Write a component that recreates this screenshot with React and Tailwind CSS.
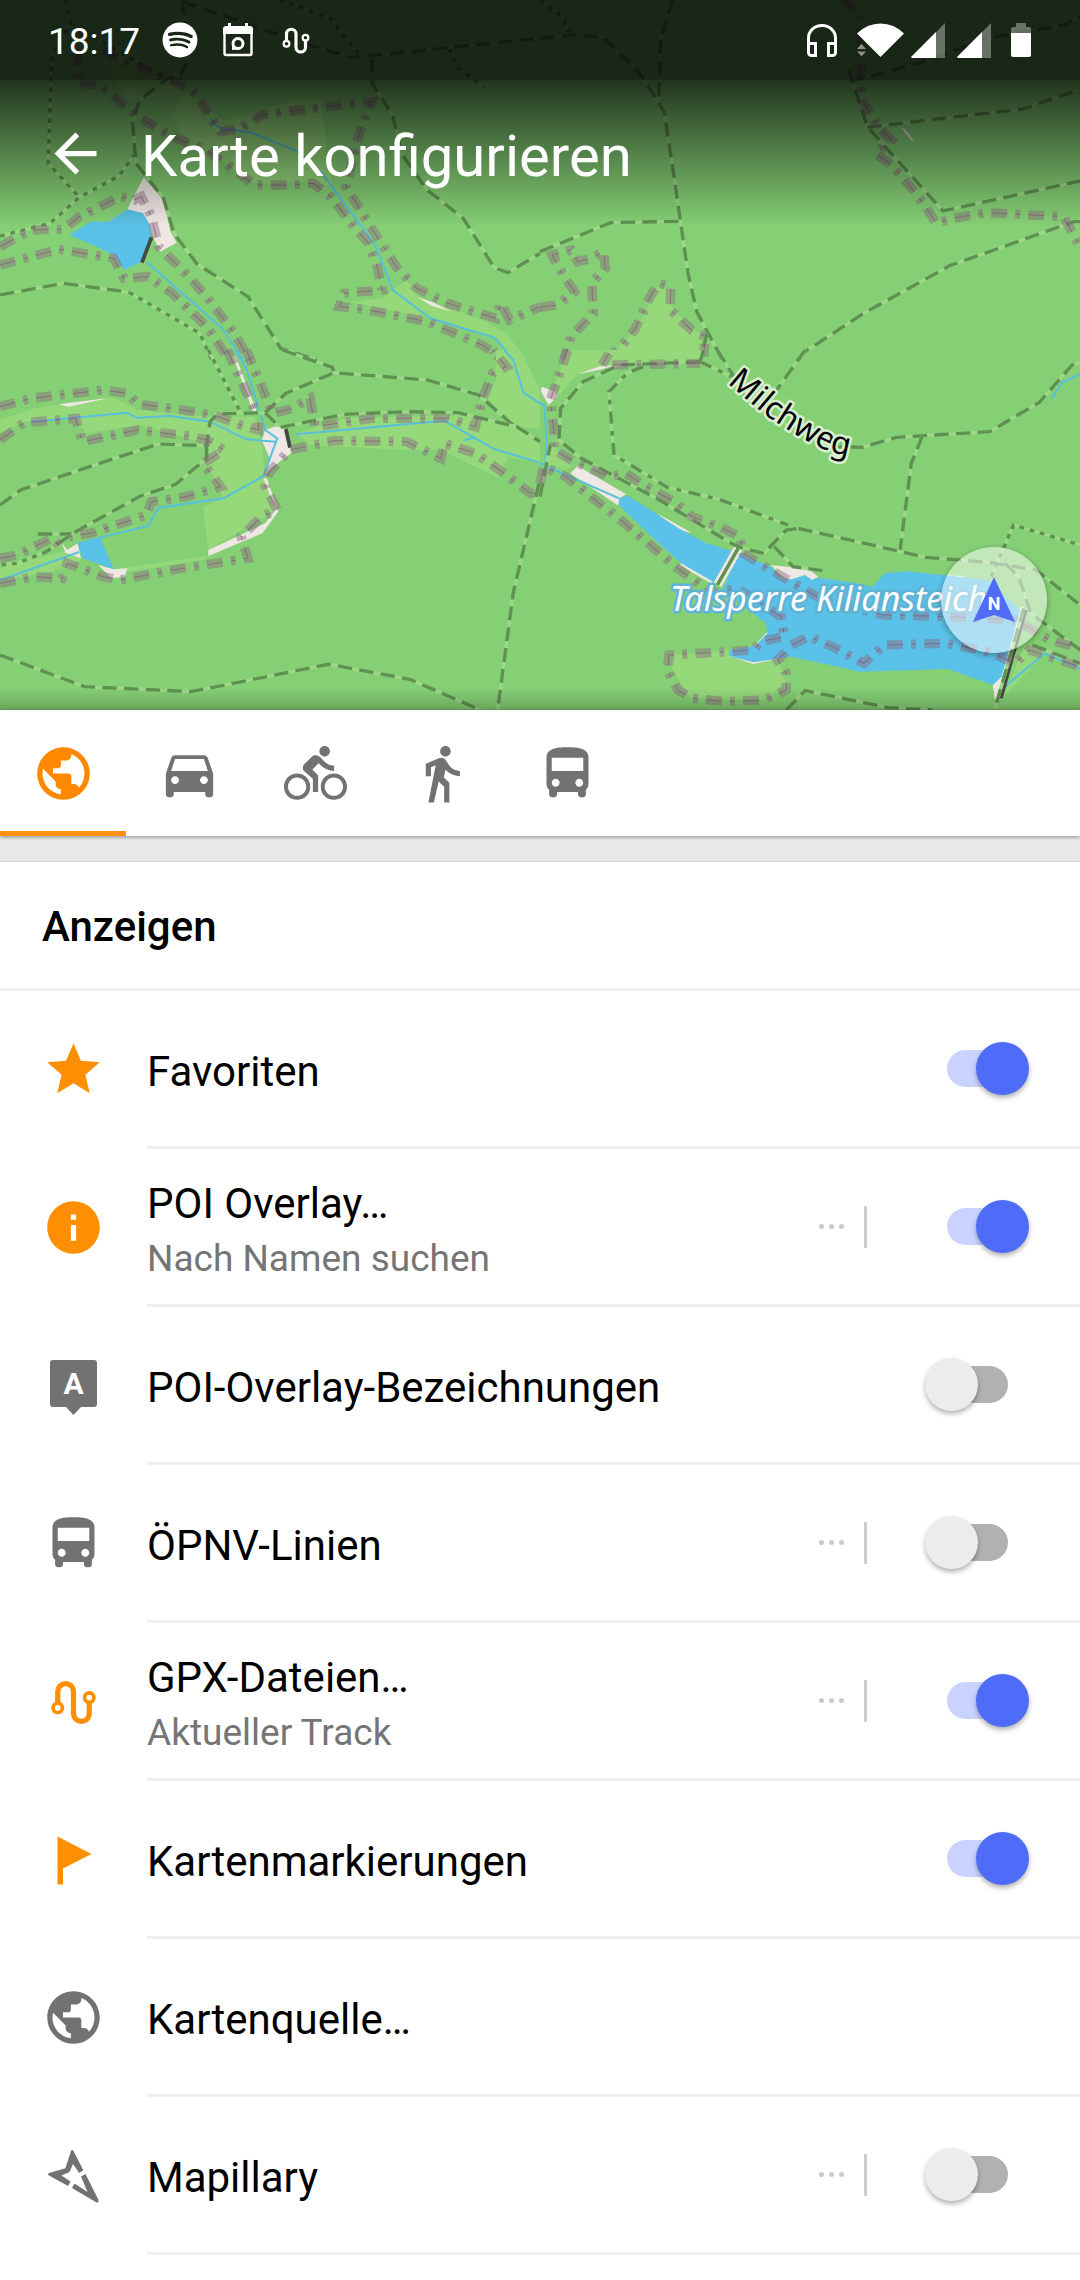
import React, { useState } from "react";
import {
  MdArrowBack,
  MdDirectionsBike,
  MdDirectionsBus,
  MdDirectionsCar,
  MdDirectionsWalk,
  MdInfo,
  MdPublic,
  MdStar,
} from "react-icons/md";
import { FaSpotify } from "react-icons/fa";

// Map data, one entry per tile. Every tile has its own coordinate space.
const TILES = [
  {
    x: 0,
    y: 0,
    meadows: [
      "290,170 340,135 540,280 600,320 650,362 850,303 930,298 965,560 900,545 740,550 540,410 495,345 540,280 370,300",
      "1010,905 1110,895 1180,840 1220,895 1400,960 1470,1000 1530,1080 1495,1080 1435,1013 1250,955",
    ],
    sand: [
      "417,532 475,600 495,695 513,728 465,755 440,700 435,675 415,640 370,628",
      "1210,890 1260,908 1310,935 1255,918",
    ],
    water: ["200,705 265,665 315,665 370,628 415,640 435,675 440,712 410,785 362,810 345,790 330,765 270,735"],
    streams: [
      "425,785 645,985 705,1080",
      "610,355 635,383 730,398 865,455 935,520 1090,735 1140,870 1250,955 1435,1013 1495,1080",
    ],
    dams: ["440,712 412,788"],
    tracks: [
      "530,0 545,185 525,222 485,237 405,300 385,370 395,490 475,595 505,700 572,792 720,890 815,1045 920,1080",
      "530,5 700,65 900,135 1020,172 1170,158 1300,143 1568,115",
      "1080,175 1080,250 1140,345 1165,460 1240,570 1345,655 1435,803 1475,818 1568,760",
      "0,885 185,850 375,877",
    ],
    dotted: [
      "375,877 580,1000 615,1080",
      "190,0 205,70 150,160 140,490 230,592",
      "0,708 145,670 230,592 345,528 390,465",
      "270,110 380,175 485,237",
      "810,0 960,55 1045,165 1080,170",
      "1305,145 1325,200 1405,262",
    ],
    borders: [
      "225,150 225,250 290,255 400,350 500,410 600,450 740,555 840,555 910,550 960,590 1020,670 1070,730 1095,800 1110,870 1000,880 985,920 1070,930 1240,965 1400,1035 1460,1080",
      "300,150 400,200 530,255 570,280 610,350 640,395 700,385 760,345 950,320 1080,305 1040,410 1005,560 1070,670 1150,800 1210,865 1300,910 1440,955 1455,910 1480,960 1568,920",
      "0,740 90,690 185,688 230,650 350,590 390,600 410,590 440,650 460,740 520,800 600,890 680,1000 725,1080",
      "0,795 170,748 270,765 330,775 360,835 430,830 500,880 600,980 640,1040 665,1080",
    ],
  },
  {
    x: 540,
    y: 0,
    meadows: ["340,860 385,870 385,930 475,1010 460,1090 180,1090 280,990"],
    sand: ["1050,385 1058,385 1085,420 1078,422"],
    tracks: [
      "0,115 105,105 185,112 285,215 340,300 360,335 385,500 410,680 430,820 455,935 530,1080",
      "0,755 205,668 405,664",
      "385,0 350,120 345,300",
      "897,210 950,380 1170,633 1568,543",
      "950,382 1250,345 1400,328 1568,268",
      "900,245 1100,190 1300,115 1520,75 1568,50",
      "1568,665 1550,665 1190,797 940,940 765,1058 750,1080",
      "485,1000 465,1080",
    ],
    dotted: ["0,0 65,50 85,100"],
    borders: [
      "880,0 930,40 930,240 935,300 985,385 1020,420 975,460 1020,495 1060,540 1120,620 1150,670 1200,655 1300,638 1520,650 1568,740",
      "0,922 50,915 100,875 70,830 35,765 90,750 110,785 150,775 185,755 190,805 150,850 155,940 90,1010 70,1080",
      "190,1080 235,1040 275,990 320,890 345,850 380,860 378,930 440,990 480,1010 475,1070",
    ],
  },
  {
    x: 0,
    y: 350,
    meadows: [
      "0,210 100,175 330,143 400,180 610,200 740,200 760,280 770,375 650,445 600,340 600,280 400,225 250,250 220,205 70,215 0,250",
      "590,470 650,445 765,380 800,480 605,600",
      "860,250 1000,205 1330,195 1500,235 1568,270 1568,338 1475,320 1448,383 1280,300 1180,300 900,285",
      "0,655 200,600 240,628 150,665 0,690",
      "330,658 600,618 600,628 370,665",
      "1440,0 1510,0 1568,120 1568,235 1500,230 1410,140 1440,90",
    ],
    sand: [
      "180,580 195,600 225,580 235,625 190,608",
      "285,645 330,658 370,655 362,680 325,685",
      "770,240 805,227 832,240 845,310 780,360 765,378 785,330 760,270",
      "605,600 770,520 800,480 765,385 775,385 808,485 762,550 605,618",
      "170,163 320,143 200,170",
      "675,15 685,20 745,185 735,185",
    ],
    water: ["225,578 290,560 330,658 240,625"],
    streams: [
      "90,215 370,188 398,204 490,197 610,215 715,268 800,275",
      "683,0 715,55 770,240 805,265 765,378 650,445 460,473 430,528 290,563",
      "230,606 0,690",
      "860,253 1290,212 1435,297 1568,338",
      "1345,272 1380,262",
      "1465,0 1490,30 1520,128 1568,160",
    ],
    dams: ["830,237 842,293"],
    tracks: [
      "820,0 965,52 970,68",
      "0,465 60,420 260,350 460,282 600,287 610,215 630,192 770,188 810,230",
      "770,188 830,130 970,68 1240,90 1390,135 1500,235",
      "815,232 1000,193 1180,185 1330,188 1500,230 1568,275",
      "600,290 600,325 510,403 410,437 220,545 135,605",
      "110,552 205,552",
      "1565,400 1490,730 1445,1080",
      "0,915 245,1010 555,1025 955,943 1190,988 1395,1080",
    ],
    dotted: ["605,0 700,190", "135,605 50,640 0,645"],
    borders: [
      "0,170 90,145 300,120 370,130 400,162 500,175 620,195 700,225 750,240 750,200",
      "0,270 70,218 220,205 230,245 240,275 400,240 550,258 600,270 650,300 590,340 640,410 540,440 440,455 425,495 270,548 200,560",
      "0,625 50,615 110,585 150,565 185,600",
      "0,700 100,680 180,685 195,640 300,680 350,690 500,660 720,625 700,560 760,500 805,480 770,410 780,370 840,300 970,272 1180,275 1280,325 1290,280 1380,310 1450,360 1540,430 1568,430",
      "660,0 690,70 740,180",
      "715,0 760,110 790,190 850,175 900,145 915,230 1080,205 1300,205 1380,230 1400,150 1430,70 1470,50 1430,0",
    ],
  },
  {
    x: 540,
    y: 350,
    meadows: [
      "80,0 210,0 480,0 465,40 230,45 110,73 60,130 20,165",
      "375,915 550,900 560,925 620,940 690,930 715,1000 650,1050 440,1045 385,960",
      "30,280 90,350 75,360 20,340",
      "1345,1040 1410,880 1568,945 1465,910",
    ],
    sand: [
      "88,370 110,348 250,433 230,445 228,467 130,400",
      "5,110 45,125 50,140 25,165 3,125",
      "110,73 170,50 220,45 180,58",
      "340,490 400,525 440,548 400,540",
      "410,640 500,690 500,702 405,645",
      "670,645 780,657 808,680 790,690 720,695",
      "620,890 665,840 665,900",
      "550,918 620,942 700,925 640,910",
      "1180,675 1240,680 1200,690",
      "1315,1005 1340,975 1395,770 1410,775 1335,1047 1320,1047",
    ],
    water: [
      "228,465 232,445 255,437 400,533 480,578 557,603 505,697 410,640 340,575",
      "575,610 670,650 700,685 730,688 770,675 790,690 810,683 900,697 965,710 1000,670 1065,664 1190,677 1300,690 1395,780 1340,980 1315,1005 1185,957 930,965 730,920 620,937 550,918 550,900 625,888 660,850 655,820 600,775 530,720",
    ],
    streams: [
      "0,160 12,165 20,270 15,340",
      "0,340 230,445",
      "1568,73 1515,97 1485,147",
      "1350,1010 1465,910 1568,955",
    ],
    dams: ["1410,780 1380,890 1338,1045"],
    bridges: ["515,705 577,592"],
    tracks: [
      "465,35 230,45 125,95 60,175 55,270 120,325 350,452 555,580 580,592 650,610 715,540 750,535",
      "680,590 735,650 820,662",
      "475,0 465,35",
      "515,0 560,75 600,140 700,215 850,290 935,292 1035,262 1305,245 1450,157 1545,45 1568,38",
      "770,0 670,145 640,170",
      "1110,258 1078,340 1045,605",
      "750,535 1120,622 1310,638 1440,660 1568,765",
      "1350,640 1390,680 1425,790 1568,900",
      "715,1080 770,1022 1010,1073 1140,1080",
      "1430,885 1568,940",
      "0,440 30,285",
      "1405,775 1320,1080",
    ],
    solid: ["515,705 577,592"],
    mixed: ["465,35 555,80", "300,50 255,68 200,125 215,315 370,412 520,448 720,525"],
    dotted: ["1310,680 1375,525 1568,585"],
    borders: [
      "80,0 50,90 30,150 40,240 40,300 100,335 200,380 250,370 300,405 390,455 440,500 520,530 580,560 590,610 670,660 770,720 830,755 1000,795 1190,800 1380,810 1480,870 1568,895",
      "0,400 10,350 75,380 240,515 400,655 500,730 570,715 620,745 700,800 710,860 640,875 620,900 550,905 375,915 370,960 400,1020 440,1045 540,1055 650,1050 715,1020 715,970 690,930 730,890",
      "730,885 780,860 850,890 940,940 1000,885 1180,880 1300,905 1380,940 1420,900 1568,950",
      "180,45 200,10",
      "210,45 465,40",
    ],
  },
];

const Path = ({ points, dash }) => (
  <g strokeWidth="10">
    <polyline points={points} stroke="#9cd985" />
    <polyline points={points} stroke="#5f9152" strokeDasharray={dash} />
  </g>
);

const MapTile = ({ tile }) => (
  <g transform={`translate(${tile.x} ${tile.y}) scale(0.3444 0.3333)`} fill="none">
    {tile.meadows?.map((p) => <polygon key={p} points={p} fill="#95d97b" />)}
    {tile.sand?.map((p) => <polygon key={p} points={p} fill="#efe7e4" />)}
    {tile.water?.map((p) => <polygon key={p} points={p} fill="#5ac1e8" />)}
    {tile.streams?.map((p) => <polyline key={p} points={p} stroke="#58bfdc" strokeWidth="6" />)}
    {tile.bridges?.map((p) => <polyline key={p} points={p} stroke="#efe7e4" strokeWidth="26" />)}
    {tile.dams?.map((p) => <polyline key={p} points={p} stroke="#424a42" strokeWidth="11" />)}
    {tile.dotted?.map((p) => <Path key={p} points={p} dash="14 17" />)}
    {tile.mixed?.map((p) => <Path key={p} points={p} dash="36 22 14 22" />)}
    {tile.solid?.map((p) => <Path key={p} points={p} />)}
    {tile.tracks?.map((p) => <Path key={p} points={p} dash="42 21" />)}
    {tile.borders?.map((p) => (
      <g key={p} strokeDasharray="46 24 14 24">
        <polyline points={p} stroke="#8b6b80" strokeOpacity="0.46" strokeWidth="28" />
        <polyline points={p} stroke="#8a4a7c" strokeOpacity="0.6" strokeWidth="3" />
      </g>
    ))}
  </g>
);

const MapView = () => (
  <svg
    viewBox="0 0 1080 710"
    preserveAspectRatio="xMidYMid slice"
    className="block h-[710px] w-full bg-[#85d075]"
    aria-label="Karte"
  >
    <defs>
      <path id="milchweg" d="M727 383 L760 411 Q795 437 830 452 L870 461" />
      <linearGradient id="bottomShade" x1="0" y1="0" x2="0" y2="1">
        <stop offset="0" stopColor="#000" stopOpacity="0" />
        <stop offset="1" stopColor="#000" stopOpacity="0.2" />
      </linearGradient>
    </defs>
    {TILES.map((tile) => (
      <MapTile key={`${tile.x}-${tile.y}`} tile={tile} />
    ))}
    <g fontFamily="'Noto Sans', sans-serif" paintOrder="stroke" strokeLinejoin="round" strokeWidth="5">
      <text fill="#000" stroke="#d9efcf" fontSize="32">
        <textPath href="#milchweg">Milchweg</textPath>
      </text>
      <text x="670" y="611" fill="#fff" stroke="#5fb4d6" fontSize="34" fontStyle="italic">
        Talsperre Kiliansteich
      </text>
    </g>
    <rect y="688" width="1080" height="22" fill="url(#bottomShade)" />
  </svg>
);

/* Icons */
const TrackIcon = ({ className }) => (
  <svg viewBox="0 0 24 24" className={className} fill="none" stroke="currentColor">
    <path d="M6 12.6V8.2a3 3 0 0 1 6 0v8.4a3 3 0 0 0 6 0v-4.2" strokeWidth="2" />
    <circle cx="6" cy="14.4" r="1.8" strokeWidth="1.4" />
    <circle cx="18" cy="10.5" r="1.8" strokeWidth="1.4" />
  </svg>
);

const LabelIcon = ({ className }) => (
  <svg viewBox="0 0 63 63" className={className} fill="currentColor">
    <path d="M11 6h41a3 3 0 0 1 3 3v41a3 3 0 0 1-3 3H39l-7.500 8L24 53H11a3 3 0 0 1-3-3V9a3 3 0 0 1 3-3z" />
    <text
      x="31.500"
      y="40"
      fill="#fff"
      fontSize="30"
      fontWeight="700"
      fontFamily="Roboto, sans-serif"
      textAnchor="middle"
    >
      A
    </text>
  </svg>
);

const FlagIcon = ({ className }) => (
  <svg viewBox="0 0 63 63" className={className} fill="currentColor">
    <path d="M15.500 8.500L49.500 26L21 40.500V56.500H15.500z" />
  </svg>
);

const MapillaryIcon = ({ className }) => (
  <svg viewBox="0 0 63 63" className={className} fill="currentColor">
    <path
      fillRule="evenodd"
      d="M29 7Q30 5 31.500 7L41.300 26.300L37.200 29L31 20L27.500 28L19.500 31.500L28.500 37.500L26 42L7 31.500Q5 30 7 29L23.400 24.300z"
    />
    <path d="M39 32.500L43.500 30L56.500 56Q57 59 54.500 58.500L30 44L32.500 39.500L45.500 48z" />
  </svg>
);

const EventIcon = ({ className }) => (
  <svg viewBox="0 0 30 34" className={className} fill="none" stroke="currentColor">
    <path d="M1.500 10V30.500a1.500 1.500 0 0 0 1.500 1.500H27a1.500 1.500 0 0 0 1.500-1.500V10" strokeWidth="2.400" />
    <path d="M3 3h2V0h3v3h14V0h3v3h2a3 3 0 0 1 3 3v5H0V6a3 3 0 0 1 3-3z" fill="currentColor" stroke="none" />
    <circle cx="15" cy="20.500" r="5" strokeWidth="3" />
    <path d="M9 27v-6l5 5.500z" fill="currentColor" stroke="none" />
  </svg>
);

const HeadphonesIcon = ({ className }) => (
  <svg viewBox="0 0 30 33" className={className} fill="none" stroke="currentColor" strokeWidth="3">
    <path d="M1.500 20V14a13.500 12.500 0 0 1 27 0v6" />
    <path d="M1.500 19.500h7v12h-4a3 3 0 0 1-3-3zM28.500 19.500h-7v12h4a3 3 0 0 0 3-3z" />
  </svg>
);

const WifiIcon = ({ className }) => (
  <svg viewBox="0 0 47 34" className={className} fill="currentColor">
    <path d="M0 10.500Q10 .5 23.500 .5T47 10.500L23.500 34z" />
    <path d="M0 26l4.500-5L9 26zM0 28.500h9l-4.500 5z" opacity="0.500" />
  </svg>
);

const SignalIcon = ({ className }) => (
  <svg viewBox="0 0 34 35" className={className} fill="currentColor">
    <path d="M0 35L34 0V35z" opacity="0.350" />
    <path d="M0 34L25 9V35H1z" />
  </svg>
);

const BatteryIcon = ({ className }) => (
  <svg viewBox="0 0 20 34" className={className} fill="currentColor">
    <path d="M5 0h10v4h3a2 2 0 0 1 2 2v5H0V6a2 2 0 0 1 2-2h3z" opacity="0.350" />
    <path d="M0 10h20v22a2 2 0 0 1-2 2H2a2 2 0 0 1-2-2z" />
  </svg>
);

const StatusBar = () => (
  <div className="flex h-20 items-center bg-black/81 pl-12 pr-[49px]">
    <span className="pt-0.5 text-[37px] leading-none">18:17</span>
    <FaSpotify className="ml-[22px] size-9" />
    <EventIcon className="ml-[25px] h-[34px] w-[30px]" />
    <TrackIcon className="ml-6 size-[38px]" />
    <div className="ml-auto flex items-center">
      <HeadphonesIcon className="h-[33px] w-[30px]" />
      <WifiIcon className="ml-5 h-[34px] w-[47px]" />
      <SignalIcon className="ml-[7px] h-[35px] w-[34px]" />
      <SignalIcon className="ml-3 h-[35px] w-[34px]" />
      <BatteryIcon className="ml-5 h-[34px] w-5" />
    </div>
  </div>
);

const profiles = [
  { id: "browse", label: "Karte ansehen", Icon: MdPublic },
  { id: "car", label: "Auto", Icon: MdDirectionsCar },
  { id: "bike", label: "Fahrrad", Icon: MdDirectionsBike },
  { id: "walk", label: "Zu Fuß", Icon: MdDirectionsWalk },
  { id: "bus", label: "Öffentliche Verkehrsmittel", Icon: MdDirectionsBus },
];

const layers = [
  { id: "favorites", title: "Favoriten", Icon: MdStar, on: true },
  { id: "poi", title: "POI Overlay…", subtitle: "Nach Namen suchen", Icon: MdInfo, on: true, more: true },
  { id: "poi-labels", title: "POI-Overlay-Bezeichnungen", Icon: LabelIcon, on: false },
  { id: "transport", title: "ÖPNV-Linien", Icon: MdDirectionsBus, on: false, more: true },
  { id: "gpx", title: "GPX-Dateien…", subtitle: "Aktueller Track", Icon: TrackIcon, on: true, more: true },
  { id: "markers", title: "Kartenmarkierungen", Icon: FlagIcon, on: true },
  { id: "source", title: "Kartenquelle…", Icon: MdPublic },
  { id: "mapillary", title: "Mapillary", Icon: MapillaryIcon, on: false, more: true },
];

const Switch = ({ id, checked, onChange }) => (
  <input
    id={id}
    type="checkbox"
    role="switch"
    checked={checked}
    onChange={onChange}
    className="relative h-[53px] w-[104px] shrink-0 cursor-pointer appearance-none before:absolute before:left-[22px] before:top-2 before:h-[37px] before:w-[61px] before:rounded-full before:bg-[#b1b1b1] after:absolute after:left-0 after:top-0 after:size-[53px] after:rounded-full after:bg-[#ececec] after:shadow-[0_3px_5px_rgba(0,0,0,0.3)] checked:before:bg-[#cad3ff] checked:after:left-[51px] checked:after:bg-[#4f6cf8]"
  />
);

const LayerRow = ({ layer, checked, onToggle }) => {
  const { id, title, subtitle, Icon, more } = layer;
  const hasSwitch = checked !== undefined;
  const text = (
    <>
      <span className="block text-[42px] leading-[50px]">{title}</span>
      {subtitle && <span className="mt-2 block text-[37px] leading-[44px] text-[#757575]">{subtitle}</span>}
    </>
  );

  return (
    <li className="flex items-center pl-[42px]">
      <Icon className={`mb-0.5 size-[63px] shrink-0 ${checked ? "text-[#ff8f00]" : "text-[#727272]"}`} />
      <div className="ml-[42px] flex h-[158px] flex-1 items-center border-b-3 border-[#efefef] pr-[51px]">
        {hasSwitch ? (
          <label htmlFor={id} className="flex-1 cursor-pointer pt-1.5">{text}</label>
        ) : (
          <button type="button" className="flex-1 pt-1.5 text-left">{text}</button>
        )}
        {more && (
          <button
            type="button"
            aria-label={`${title} Optionen`}
            className="mr-[58px] flex h-[42px] items-center gap-[5px] border-r-3 border-[#cdcdcd] pr-5"
          >
            <span className="size-[5px] rounded-full bg-[#cacaca]" />
            <span className="size-[5px] rounded-full bg-[#cacaca]" />
            <span className="size-[5px] rounded-full bg-[#cacaca]" />
          </button>
        )}
        {hasSwitch && <Switch id={id} checked={checked} onChange={onToggle} />}
      </div>
    </li>
  );
};

const App = () => {
  const [profile, setProfile] = useState("browse");
  const [enabled, setEnabled] = useState(
    Object.fromEntries(layers.map((layer) => [layer.id, layer.on]))
  );

  const toggle = (id) => {
    setEnabled((prev) => ({ ...prev, [id]: !prev[id] }));
  };

  return (
    <div className="min-h-screen bg-white font-[Roboto,sans-serif] text-black">
      {/* Karte mit Kopfzeile */}
      <div className="relative overflow-hidden">
        <MapView />
        <header className="absolute inset-x-0 top-0 text-white">
          <StatusBar />
          <div className="flex h-[147px] items-center bg-linear-to-b from-black/75 to-transparent pl-11">
            <button type="button" aria-label="Zurück">
              <MdArrowBack className="size-[63px]" />
            </button>
            <h1 className="ml-[34px] pt-1 text-[58px] leading-none">Karte konfigurieren</h1>
          </div>
        </header>
        <button
          type="button"
          aria-label="Kompass"
          className="absolute bottom-[57px] right-[33px] size-[106px] rounded-full bg-white/50 shadow-[0_2px_6px_rgba(0,0,0,0.35)]"
        >
          <svg viewBox="0 0 106 106" className="size-full">
            <path d="M53 30L74 75L53 68L32 75z" fill="#4f6cf8" />
            <text x="53" y="63" fill="#fff" fontSize="18" fontWeight="700" textAnchor="middle">
              N
            </text>
          </svg>
        </button>
      </div>

      {/* Profile */}
      <nav className="relative flex bg-white shadow-[0_1px_4px_rgba(0,0,0,0.4)]">
        {profiles.map(({ id, label, Icon }) => (
          <button
            key={id}
            type="button"
            aria-label={label}
            onClick={() => setProfile(id)}
            className={`flex h-[126px] w-[126px] items-center justify-center border-b-5 pt-[5px] ${
              profile === id ? "border-[#ff9012] text-[#ff8800]" : "border-transparent text-[#727272]"
            }`}
          >
            <Icon className="size-[63px]" />
          </button>
        ))}
      </nav>
      <div className="h-[26px] border-b border-[#d4d4d4] bg-[#e8e8e8]" />

      {/* Ebenen */}
      <section>
        <h2 className="flex h-[129px] items-center border-b-3 border-[#efefef] px-[42px] pt-1 text-[42px] font-medium leading-[50px]">
          Anzeigen
        </h2>
        <ul>
          {layers.map((layer) => (
            <LayerRow
              key={layer.id}
              layer={layer}
              checked={enabled[layer.id]}
              onToggle={() => toggle(layer.id)}
            />
          ))}
        </ul>
      </section>
    </div>
  );
};

export default App;
